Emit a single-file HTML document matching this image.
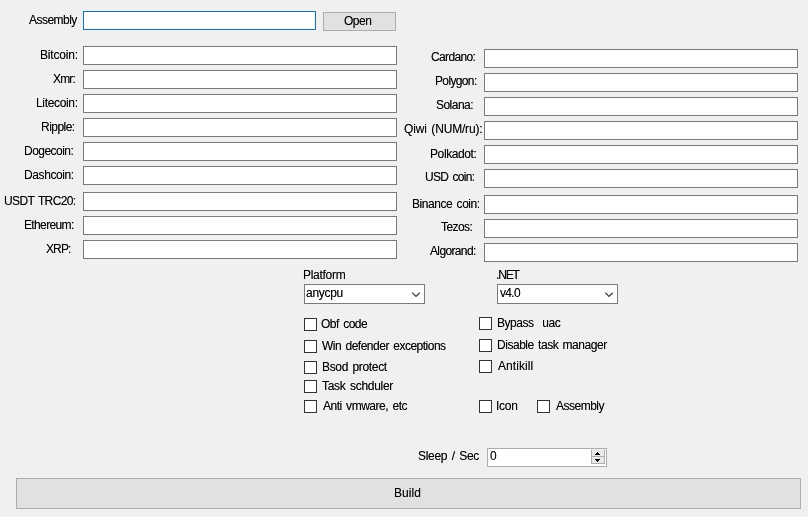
<!DOCTYPE html>
<html><head><meta charset="utf-8"><title>Builder</title>
<style>
html,body{margin:0;padding:0;}
body{width:808px;height:517px;background:#f0f0f0;position:relative;overflow:hidden;font-family:"Liberation Sans","IPAGothic",sans-serif;font-size:12px;color:#000;word-spacing:1.5px;}
.t{position:absolute;white-space:nowrap;line-height:12px;height:12px;will-change:transform;text-shadow:0 0 0 rgba(0,0,0,.45);}
.tb{position:absolute;box-sizing:border-box;background:#fff;border:1px solid #7a7a7a;height:19px;width:314px;}
.cb{position:absolute;box-sizing:border-box;width:13px;height:13px;background:#fff;border:1px solid #333;}
.btn{position:absolute;box-sizing:border-box;background:#e1e1e1;border:1px solid #adadad;}
.combo{position:absolute;box-sizing:border-box;background:#fff;border:1px solid #7a7a7a;height:20px;width:121px;}
</style></head><body>

<div class="t" style="left:29px;top:14px;letter-spacing:-0.53px">Assembly</div>
<div class="tb" style="left:83px;top:11px;width:233px;border-color:#2c6a9c;box-shadow:-1px -1px 0 0 #dcf6fd, inset -1px -1px 0 0 #e6f9fe;"></div>
<div class="btn" style="left:323px;top:12px;width:73px;height:19px;"></div>
<div class="t" style="left:344px;top:15px;letter-spacing:-0.51px">Open</div>
<div class="t" style="left:40px;top:49px;letter-spacing:-0.19px">Bitcoin:</div>
<div class="tb" style="left:83px;top:46px;"></div>
<div class="t" style="left:53px;top:73px;letter-spacing:-0.83px">Xmr:</div>
<div class="tb" style="left:83px;top:70px;"></div>
<div class="t" style="left:36px;top:97px;letter-spacing:-0.34px">Litecoin:</div>
<div class="tb" style="left:83px;top:94px;"></div>
<div class="t" style="left:41px;top:121px;letter-spacing:-0.54px">Ripple:</div>
<div class="tb" style="left:83px;top:118px;"></div>
<div class="t" style="left:24px;top:145px;letter-spacing:-0.53px">Dogecoin:</div>
<div class="tb" style="left:83px;top:142px;"></div>
<div class="t" style="left:24px;top:169px;letter-spacing:-0.4px">Dashcoin:</div>
<div class="tb" style="left:83px;top:166px;"></div>
<div class="t" style="left:4px;top:195px;letter-spacing:-0.63px">USDT TRC20:</div>
<div class="tb" style="left:83px;top:192px;"></div>
<div class="t" style="left:24px;top:219px;letter-spacing:-0.64px">Ethereum:</div>
<div class="tb" style="left:83px;top:216px;"></div>
<div class="t" style="left:46px;top:243px;letter-spacing:-0.88px">XRP:</div>
<div class="tb" style="left:83px;top:240px;"></div>
<div class="t" style="left:431px;top:51px;letter-spacing:-0.64px">Cardano:</div>
<div class="tb" style="left:484px;top:49px;"></div>
<div class="t" style="left:435px;top:75px;letter-spacing:-0.64px">Polygon:</div>
<div class="tb" style="left:484px;top:73px;"></div>
<div class="t" style="left:436px;top:99px;letter-spacing:-0.53px">Solana:</div>
<div class="tb" style="left:484px;top:97px;"></div>
<div class="t" style="left:404px;top:123px;letter-spacing:-0.17px">Qiwi (NUM/ru):</div>
<div class="tb" style="left:484px;top:121px;"></div>
<div class="t" style="left:430px;top:148px;letter-spacing:-0.4px">Polkadot:</div>
<div class="tb" style="left:484px;top:145px;"></div>
<div class="t" style="left:425px;top:171px;letter-spacing:-0.69px">USD coin:</div>
<div class="tb" style="left:484px;top:169px;"></div>
<div class="t" style="left:412px;top:198px;letter-spacing:-0.45px">Binance coin:</div>
<div class="tb" style="left:484px;top:195px;"></div>
<div class="t" style="left:441px;top:221px;letter-spacing:-0.56px">Tezos:</div>
<div class="tb" style="left:484px;top:219px;"></div>
<div class="t" style="left:430px;top:245px;letter-spacing:-0.64px">Algorand:</div>
<div class="tb" style="left:484px;top:243px;"></div>
<div class="t" style="left:303px;top:269px;letter-spacing:-0.29px">Platform</div>
<div class="t" style="left:496px;top:269px;letter-spacing:-1.13px">.NET</div>
<div class="combo" style="left:304px;top:284px;"><svg width="9" height="6" viewBox="0 0 9 6" style="position:absolute;left:107px;top:7px"><path d="M0.3 0.7 L4 4.4 L7.7 0.7" fill="none" stroke="#3c3c3c" stroke-width="1.25"/></svg></div>
<div class="combo" style="left:497px;top:284px;"><svg width="9" height="6" viewBox="0 0 9 6" style="position:absolute;left:107px;top:7px"><path d="M0.3 0.7 L4 4.4 L7.7 0.7" fill="none" stroke="#3c3c3c" stroke-width="1.25"/></svg></div>
<div class="t" style="left:306px;top:287px;letter-spacing:-0.29px">anycpu</div>
<div class="t" style="left:500px;top:287px;letter-spacing:-0.7px">v4.0</div>
<div class="cb" style="left:304px;top:318px"></div>
<div class="t" style="left:321px;top:318px;letter-spacing:-0.51px">Obf code</div>
<div class="cb" style="left:304px;top:340px"></div>
<div class="t" style="left:322px;top:340px;letter-spacing:-0.5px">Win defender exceptions</div>
<div class="cb" style="left:304px;top:361px"></div>
<div class="t" style="left:322px;top:361px;letter-spacing:-0.34px">Bsod protect</div>
<div class="cb" style="left:304px;top:380px"></div>
<div class="t" style="left:322px;top:380px;letter-spacing:-0.3px">Task schduler</div>
<div class="cb" style="left:304px;top:400px"></div>
<div class="t" style="left:323px;top:400px;letter-spacing:-0.48px">Anti vmware, etc</div>
<div class="cb" style="left:479px;top:317px"></div>
<div class="t" style="left:497px;top:317px;letter-spacing:-0.47px">Bypass&nbsp; uac</div>
<div class="cb" style="left:479px;top:339px"></div>
<div class="t" style="left:497px;top:339px;letter-spacing:-0.47px">Disable task manager</div>
<div class="cb" style="left:479px;top:360px"></div>
<div class="t" style="left:498px;top:360px;letter-spacing:0.06px">Antikill</div>
<div class="cb" style="left:479px;top:400px"></div>
<div class="t" style="left:496px;top:400px;letter-spacing:-0.23px">Icon</div>
<div class="cb" style="left:537px;top:400px"></div>
<div class="t" style="left:556px;top:400px;letter-spacing:-0.5px">Assembly</div>
<div class="t" style="left:418px;top:450px;letter-spacing:-0.3px">Sleep / Sec</div>
<div class="tb" style="left:487px;top:448px;width:120px;height:19px;border-color:#adadad;"><svg width="14" height="15" viewBox="0 0 14 15" shape-rendering="crispEdges" style="position:absolute;left:103px;top:0px"><rect x="0" y="0" width="14" height="15" fill="#adadad"/><rect x="1" y="0" width="12" height="7" fill="#e9e9e9"/><rect x="1" y="8" width="12" height="6" fill="#e9e9e9"/><rect x="0" y="0" width="14" height="1" fill="#ececec"/><path d="M6 3h1v1h-1zM5 4h3v1h-3zM4 5h5v1h-5z" fill="#000"/><path d="M4 10h5v1h-5zM5 11h3v1h-3zM6 12h1v1h-1z" fill="#000"/></svg></div>
<div class="t" style="left:490px;top:450px;letter-spacing:0px">0</div>
<div class="btn" style="left:16px;top:478px;width:785px;height:31px;"></div>
<div class="t" style="left:394px;top:487px;letter-spacing:0.08px">Build</div>
</body></html>
